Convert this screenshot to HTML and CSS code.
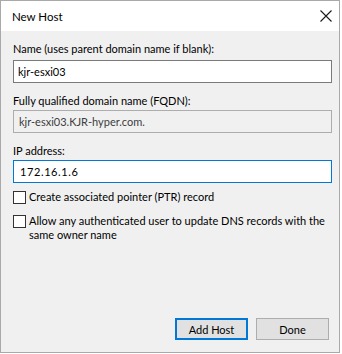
FILE: index.html
```html
<!DOCTYPE html>
<html lang="en">
<head>
  <meta charset="UTF-8" />
  <title>New Host</title>
  <link rel="stylesheet" href="styles.css">
</head>
<body>
  <div class="dialog">
    <div class="titlebar">
      <span class="title">New Host</span>
      <svg class="close" width="12" height="12" viewBox="0 0 12 12">
        <path d="M0.5 0.5 L11.5 11.5 M11.5 0.5 L0.5 11.5" stroke="#1a1a1a" stroke-width="1.1" fill="none" />
      </svg>
    </div>

    <div class="content">
      <label class="field-label first" for="name">Name (uses parent domain name if blank):</label>
      <input class="textbox" id="name" type="text" value="kjr-esxi03" />

      <label class="field-label" for="fqdn">Fully qualified domain name (FQDN):</label>
      <input class="textbox readonly" id="fqdn" type="text" value="kjr-esxi03.KJR-hyper.com." readonly />

      <label class="field-label" for="ip">IP address:</label>
      <input class="textbox focused" id="ip" type="text" value="172.16.1.6" />

      <div class="check-row">
        <span class="checkbox"></span>
        <span class="check-text">Create associated pointer (PTR) record</span>
      </div>
      <div class="check-row">
        <span class="checkbox"></span>
        <span class="check-text">Allow any authenticated user to update DNS records with the same owner name</span>
      </div>

      <div class="buttons">
        <button class="btn default">Add Host</button>
        <button class="btn">Done</button>
      </div>
    </div>
  </div>
</body>
</html>
```

FILE: styles.css
```css
body {
  margin: 0;
  background: #fff;
  font-family: 'Lato', 'Noto Sans', sans-serif;
  font-size: 11px;
  color: #000;
}

.dialog {
  width: 338px;
  height: 351px;
  border: 1px solid #a9a9a9;
  display: flex;
  flex-direction: column;
  background: #f0f0f0;
}

.titlebar {
  height: 30px;
  background: #fff;
  display: flex;
  align-items: center;
  justify-content: space-between;
  padding: 0 7px 0 11px;
}

.title {
  font-size: 11.5px;
  color: #000;
}

.content {
  flex: 1;
  display: flex;
  flex-direction: column;
  padding: 10px 7px 12px 12px;
}

.field-label {
  line-height: 15px;
  margin-bottom: 2px;
}

.field-label.first {
  margin-bottom: 4px;
}

.textbox {
  font-family: inherit;
  font-size: 11px;
  height: 23px;
  box-sizing: border-box;
  border: 1px solid #7a7a7a;
  background: #fff;
  padding: 0 4px;
  margin: 0 0 10px;
  outline: none;
  color: #000;
}

.textbox.readonly {
  background: #f0f0f0;
  border-color: #adadad;
  color: #3c3c3c;
  padding-left: 5px;
}

.textbox.focused {
  border-color: #0078d7;
  margin-bottom: 7px;
  padding-left: 6px;
  letter-spacing: 0.6px;
}

.check-row {
  display: flex;
  align-items: flex-start;
  gap: 3px;
  margin-bottom: 10px;
  line-height: 14px;
}

.checkbox {
  flex: none;
  width: 11px;
  height: 11px;
  border: 1px solid #333;
  background: #fff;
  margin-top: 1px;
}

.buttons {
  margin-top: auto;
  display: flex;
  justify-content: flex-end;
  gap: 8px;
  padding-right: 3px;
}

.btn {
  font-family: inherit;
  font-size: 11px;
  width: 73px;
  height: 22px;
  border: 1px solid #adadad;
  background: #e1e1e1;
  color: #000;
  padding: 0;
}

.btn.default {
  border: 2px solid #0078d7;
}
```
